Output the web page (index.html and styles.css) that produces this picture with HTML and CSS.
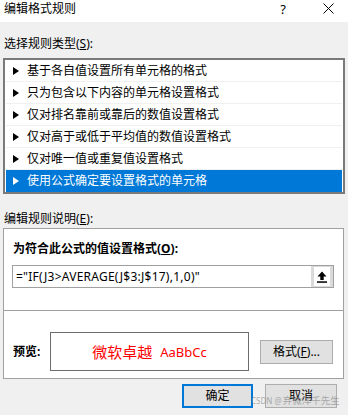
FILE: index.html
```html
<!DOCTYPE html>
<html lang="zh-CN">
<head>
<meta charset="utf-8">
<title>编辑格式规则</title>
<link rel="stylesheet" href="styles.css">
</head>
<body>
<div class="titlebar">
  <span class="title">编辑格式规则</span>
  <span class="help">?</span>
  <span class="close"><svg width="11" height="11" viewBox="0 0 11 11"><path d="M0.5 0.5 L10.5 10.5 M10.5 0.5 L0.5 10.5" stroke="#000" stroke-width="1" fill="none"/></svg></span>
</div>
<div class="main">
  <div class="label top-label">选择规则类型(<u>S</u>):</div>
  <div class="listbox">
    <div class="row"><span class="tri"></span>基于各自值设置所有单元格的格式</div>
    <div class="row"><span class="tri"></span>只为包含以下内容的单元格设置格式</div>
    <div class="row"><span class="tri"></span>仅对排名靠前或靠后的数值设置格式</div>
    <div class="row"><span class="tri"></span>仅对高于或低于平均值的数值设置格式</div>
    <div class="row"><span class="tri"></span>仅对唯一值或重复值设置格式</div>
    <div class="row sel"><span class="tri"></span>使用公式确定要设置格式的单元格</div>
  </div>
  <div class="label desc-label">编辑规则说明(<u>E</u>):</div>
  <div class="group">
    <div class="formula-sec">
      <div class="bold-label">为符合此公式的值设置格式(<u>O</u>):</div>
      <div class="input">
        <span class="ftext">="IF(J3&gt;AVERAGE(J$3:J$17),1,0)"</span>
        <span class="ref-btn"><span class="ref-inner"><svg width="10" height="12" viewBox="0 0 10 12"><path d="M5 0.5 L0.5 5.5 H3.3 V9 H6.7 V5.5 H9.5 Z" fill="#000"/><rect x="0" y="10.3" width="10" height="1.5" fill="#000"/></svg></span></span>
      </div>
    </div>
    <div class="preview-sec">
      <span class="bold-label pv-label">预览:</span>
      <div class="preview"><span class="cn">微软卓越</span><span class="lat">AaBbCc</span></div>
      <button class="btn fmt-btn">格式(<u>F</u>)...</button>
    </div>
  </div>
  <div class="buttons">
    <button class="btn ok">确定</button>
    <button class="btn cancel">取消</button>
  </div>
</div>
<div class="watermark"><span class="wm-lat">CSDN @</span>弃微洋千先生</div>
</body>
</html>
```
FILE: styles.css
```css
html, body {
  margin: 0;
  padding: 0;
}
body {
  background: #f0f0f0;
  font-family: "Noto Sans", "Noto Sans CJK SC", sans-serif;
  font-size: 12px;
  color: #000;
  width: 348px;
  height: 415px;
  overflow: hidden;
  position: relative;
}
u {
  text-decoration: underline;
  text-underline-offset: 1px;
}
.titlebar {
  height: 22px;
  background: #fff;
  display: flex;
  align-items: flex-start;
  padding: 1px 9px 0 4px;
  box-sizing: border-box;
  line-height: 16px;
}
.title {
  flex: 1;
  color: #000;
}
.help {
  width: 14px;
  text-align: center;
  margin-right: 27px;
  font-size: 13px;
}
.close {
  width: 22px;
  display: flex;
  justify-content: center;
  padding-top: 2px;
}
.main {
  padding: 0 3px;
}
.label {
  line-height: 16px;
  padding-left: 1px;
}
.top-label {
  margin-top: 14px;
}
.listbox {
  margin-top: 6px;
  border: 2px solid #7a7a7a;
  padding: 0 1px;
  background: #fff;
}
.row {
  height: 22px;
  display: flex;
  align-items: center;
  border-bottom: 1px solid #f0f0f0;
  box-sizing: border-box;
  line-height: 16px;
  white-space: nowrap;
}
.row:last-child {
  border-bottom: none;
}
.tri {
  width: 0;
  height: 0;
  border-left: 6px solid #000;
  border-top: 4px solid transparent;
  border-bottom: 4px solid transparent;
  margin-left: 7px;
  margin-right: 8px;
}
.sel {
  background: #0078d7;
  color: #fff;
}
.sel .tri {
  border-left-color: #fff;
}
.desc-label {
  margin-top: 17px;
}
.group {
  margin-top: 1px;
  margin-right: 1px;
  border: 1px solid #a0a0a0;
  background: #fff;
}
.formula-sec {
  height: 82px;
  box-sizing: border-box;
  padding: 12px 0 0 9px;
  border-bottom: 1px solid #a0a0a0;
}
.bold-label {
  font-weight: bold;
  line-height: 16px;
}
.input {
  margin-top: 8px;
  margin-left: -1px;
  width: 322px;
  height: 23px;
  box-sizing: border-box;
  border: 1px solid #a0a0a0;
  display: flex;
  justify-content: space-between;
  align-items: stretch;
}
.ftext {
  padding-left: 3px;
  line-height: 21px;
  white-space: nowrap;
  letter-spacing: 0.25px;
}
.ref-btn {
  width: 22px;
  background: #dadada;
  padding: 1px 3px;
  box-sizing: border-box;
  display: flex;
}
.ref-inner {
  flex: 1;
  background: #fff;
  display: flex;
  align-items: center;
  justify-content: center;
}
.preview-sec {
  height: 67px;
  box-sizing: border-box;
  padding: 21px 0 7px 9px;
  display: flex;
  align-items: center;
}
.pv-label {
  width: 37px;
}
.preview {
  width: 199px;
  height: 39px;
  box-sizing: border-box;
  border: 1px solid #6d6d6d;
  color: #ff0000;
  display: flex;
  align-items: center;
  justify-content: center;
  font-size: 15px;
  line-height: 18px;
}
.preview .lat {
  margin-left: 8px;
  font-size: 13px;
}
.btn {
  background: #e1e1e1;
  border: 1px solid #adadad;
  font: inherit;
  color: #000;
  padding: 0;
  margin: 0;
  box-sizing: border-box;
  line-height: 16px;
}
.fmt-btn {
  margin-left: 11px;
  width: 73px;
  height: 24px;
}
.buttons {
  display: flex;
  justify-content: flex-end;
  gap: 12px;
  margin-top: 5px;
  padding-right: 8px;
}
.ok {
  width: 71px;
  height: 24px;
  border: 2px solid #0078d7;
}
.cancel {
  width: 72px;
  height: 24px;
}
.watermark {
  position: absolute;
  left: 251px;
  top: 395px;
  font-size: 9.5px;
  line-height: 12px;
  color: rgba(140, 140, 140, 0.7);
  white-space: nowrap;
}
.wm-lat {
  font-size: 8px;
  margin-right: 1px;
}
```
